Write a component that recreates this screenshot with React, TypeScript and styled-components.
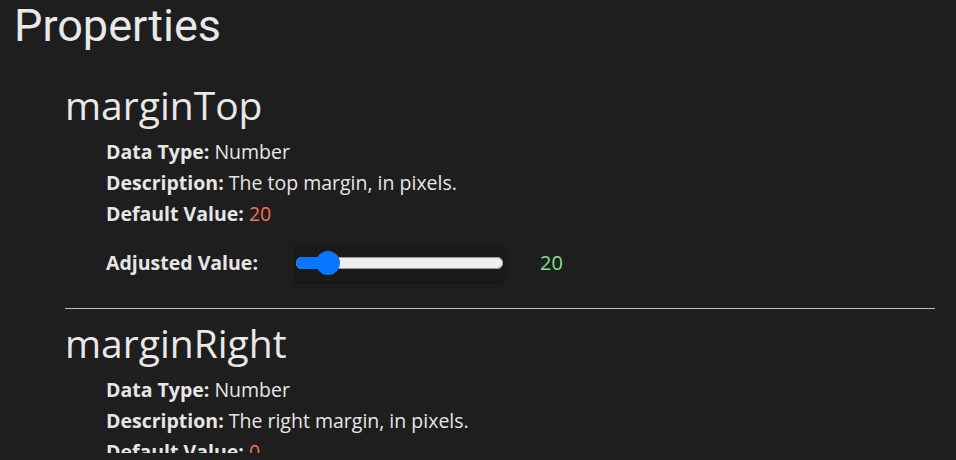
import React from "react";
import styled, { createGlobalStyle } from "styled-components";

const Global = createGlobalStyle`
  html, body { margin: 0; padding: 0; background: #1e1e1e; }
`;

const Page = styled.div`
  height: 453px;
  overflow: hidden;
  background: #1e1e1e;
  padding: 0 21px 0 14px;
  box-sizing: border-box;
  color: #e6e6e6;
  font-family: "Open Sans", "Noto Sans", sans-serif;
`;

const Title = styled.h1`
  margin: 0;
  font-family: Roboto, sans-serif;
  font-weight: 400;
  font-size: 45px;
  line-height: 52px;
  color: #e8e8e8;
`;

const Section = styled.section<{ $first?: boolean }>`
  margin-left: 51px;
  padding-top: ${(p) => (p.$first ? "29px" : "10px")};
`;

const PropName = styled.h2`
  margin: 0 0 7px;
  font-weight: 400;
  font-size: 39px;
  line-height: 48px;
  color: #e8e8e8;
`;

const Details = styled.div`
  padding-left: 41px;
  display: flex;
  flex-direction: column;
`;

const Line = styled.div`
  font-size: 19.5px;
  line-height: 31px;
  white-space: nowrap;
`;

const Label = styled.b`
  font-weight: 700;
`;

const Default = styled.span`
  color: #f0734f;
`;

const AdjustRow = styled.div`
  display: flex;
  align-items: center;
  height: 37px;
  margin-top: 15px;
  font-size: 19.5px;
`;

const AdjustLabel = styled.b`
  width: 190px;
  font-weight: 700;
`;

const SliderBox = styled.div`
  position: relative;
  width: 207px;
  height: 37px;
  background: #1a1a1a;
  box-shadow: 0 2px 4px rgba(0, 0, 0, 0.45);
  display: flex;
  align-items: center;
`;

const Track = styled.div`
  position: relative;
  width: 100%;
  height: 12px;
  border-radius: 6px;
  background: #efefef;
  box-shadow: inset 0 0 0 1px #9a9a9a;
`;

const Fill = styled.div`
  position: absolute;
  left: 0;
  top: 0;
  bottom: 0;
  border-radius: 6px;
  background: #0a75ff;
`;

const Thumb = styled.div`
  position: absolute;
  top: 50%;
  width: 24px;
  height: 24px;
  margin-top: -12px;
  margin-left: -12px;
  border-radius: 50%;
  background: #0a75ff;
`;

const Value = styled.span`
  margin-left: 37px;
  font-size: 20px;
  color: #86e08a;
`;

const Divider = styled.hr`
  margin: 27px 0 0;
  border: 0;
  height: 1px;
  background: #bdbdbd;
`;

type Prop = {
  name: string;
  type: string;
  description: string;
  def: number;
};

const props: Prop[] = [
  { name: "marginTop", type: "Number", description: "The top margin, in pixels.", def: 20 },
  { name: "marginRight", type: "Number", description: "The right margin, in pixels.", def: 0 },
];

function Slider({ value, max }: { value: number; max: number }) {
  const pos = 12 + (value / max) * (207 - 24);
  return (
    <SliderBox>
      <Track>
        <Fill style={{ width: pos }} />
        <Thumb style={{ left: pos }} />
      </Track>
    </SliderBox>
  );
}

export default function App() {
  return (
    <>
      <Global />
      <Page>
        <Title>Properties</Title>
        {props.map((p, i) => (
          <React.Fragment key={p.name}>
            <Section $first={i === 0}>
              <PropName>{p.name}</PropName>
              <Details>
                <Line>
                  <Label>Data Type:</Label> {p.type}
                </Line>
                <Line>
                  <Label>Description:</Label> {p.description}
                </Line>
                <Line>
                  <Label>Default Value:</Label> <Default>{p.def}</Default>
                </Line>
                {i === 0 && (
                  <AdjustRow>
                    <AdjustLabel>Adjusted Value:</AdjustLabel>
                    <Slider value={p.def} max={183} />
                    <Value>{p.def}</Value>
                  </AdjustRow>
                )}
              </Details>
              {i === 0 && <Divider />}
            </Section>
          </React.Fragment>
        ))}
      </Page>
    </>
  );
}
